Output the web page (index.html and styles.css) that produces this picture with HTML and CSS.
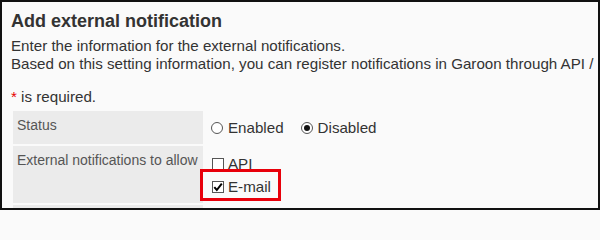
FILE: index.html
```html
<!DOCTYPE html>
<html lang="en">
<head>
<meta charset="utf-8">
<title>Add external notification</title>
<link rel="stylesheet" href="styles.css">
</head>
<body>
<div class="frame">
  <h1 class="title">Add external notification</h1>
  <p class="desc">Enter the information for the external notifications.<br><span class="nowrap">Based on this setting information, you can register notifications in Garoon through API /</span></p>
  <p class="required"><span class="star">*</span> is required.</p>
  <div class="form">
    <div class="label">Status</div>
    <div class="value">
      <div class="line">
        <span class="opt"><span class="radio"></span>Enabled</span>
        <span class="opt"><span class="radio checked"></span>Disabled</span>
      </div>
    </div>
    <div class="label">External notifications to allow</div>
    <div class="value tall">
      <div class="line">
        <span class="opt"><span class="check"></span>API</span>
      </div>
      <div class="line">
        <span class="opt highlight"><span class="check"><svg viewBox="0 0 12 12" width="12" height="12"><path d="M2.3 6.2 L4.8 9 L9.8 2.6" fill="none" stroke="#000" stroke-width="2"/></svg></span>E-mail</span>
      </div>
    </div>
    <div class="label"></div>
    <div class="value"></div>
  </div>
</div>
</body>
</html>
```

FILE: styles.css
```css
html, body {
  margin: 0;
  padding: 0;
  background: #fafafa;
}
.frame {
  box-sizing: border-box;
  width: 600px;
  height: 210px;
  border: 2px solid #111;
  padding: 8px 0 0 9px;
  overflow: hidden;
  background: #fafafa;
  font-family: "Liberation Sans", Arial, sans-serif;
  color: #333;
}
.title {
  margin: 0;
  font-size: 18px;
  line-height: 22px;
  font-weight: bold;
  color: #333;
}
.desc {
  margin: 5px 0 0;
  font-size: 15.15px;
  line-height: 18px;
}
.nowrap {
  white-space: nowrap;
}
.required {
  margin: 15px 0 0;
  font-size: 15.15px;
  line-height: 18px;
}
.star {
  color: #e60000;
}
.form {
  margin: 5px 0 0 2px;
  display: grid;
  grid-template-columns: 190px 1fr;
  gap: 2px;
}
.label {
  background: #ebebeb;
  color: #555;
  font-size: 14px;
  line-height: 17px;
  padding: 6px 4px 0;
  min-height: 27px;
}
.value {
  padding: 5px 0 5px 6px;
  font-size: 15.15px;
}
.value.tall {
  padding: 6px 0 5px 6px;
}
.line {
  height: 23px;
  display: flex;
  align-items: center;
}
.opt {
  display: inline-flex;
  align-items: center;
  margin-right: 17px;
  position: relative;
}
.radio {
  box-sizing: border-box;
  flex: none;
  width: 12px;
  height: 12px;
  border: 1px solid #555;
  border-radius: 50%;
  background: #fff;
  margin-right: 5px;
  display: inline-flex;
  align-items: center;
  justify-content: center;
}
.radio.checked::after {
  content: "";
  width: 6px;
  height: 6px;
  border-radius: 50%;
  background: #111;
}
.check {
  box-sizing: border-box;
  flex: none;
  width: 12px;
  height: 12px;
  border: 1px solid #555;
  background: #fff;
  margin-left: 1px;
  margin-right: 4px;
  display: inline-flex;
  align-items: center;
  justify-content: center;
  overflow: visible;
}
.check svg {
  display: block;
  flex: none;
}
.highlight::after {
  content: "";
  position: absolute;
  left: -11px;
  top: -9px;
  width: 81px;
  height: 32px;
  box-sizing: border-box;
  border: 3px solid #e8000b;
}
```
